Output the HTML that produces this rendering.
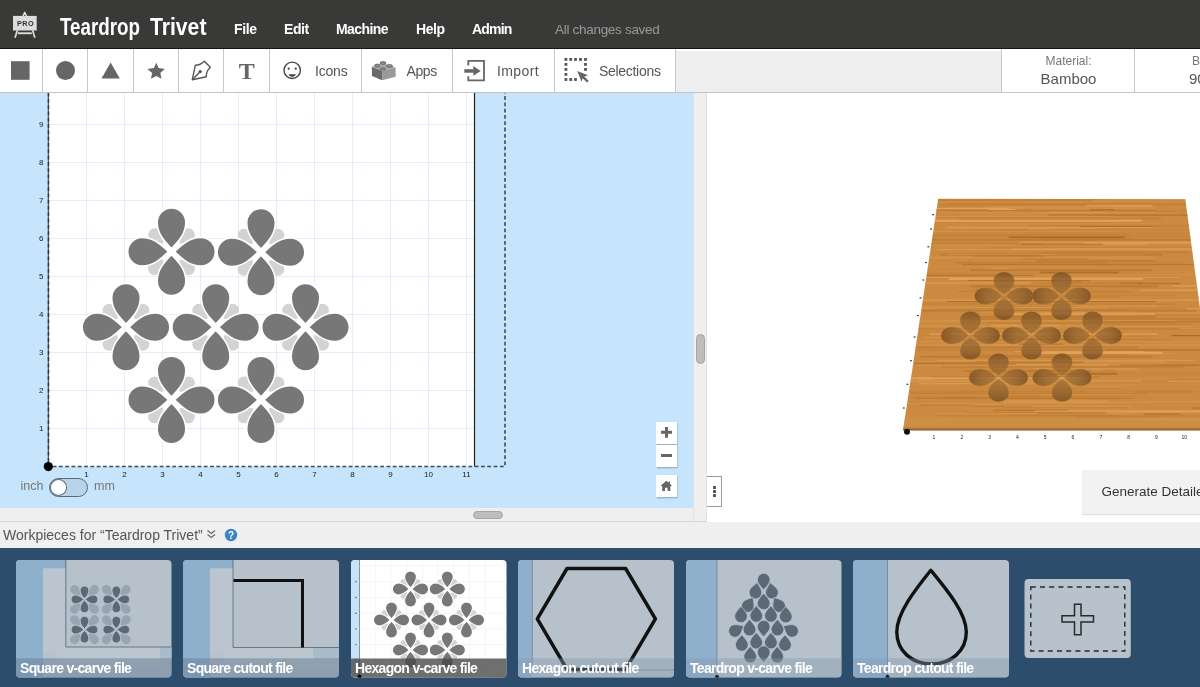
<!DOCTYPE html>
<html><head><meta charset="utf-8">
<style>
*{margin:0;padding:0;box-sizing:border-box}
html,body{width:1200px;height:687px;overflow:hidden;background:#fff;font-family:"Liberation Sans",sans-serif}
.a{position:absolute}
#hdr,#tb,#canvas,#right,#wpbar,#bottom{will-change:transform}
#hdr{left:0;top:0;width:1200px;height:49px;background:#393a38;border-bottom:1px solid #141414}
#tb{left:0;top:49px;width:1200px;height:44px;background:#eeeeee;border-bottom:1px solid #c4c4c4;box-shadow:inset 0 2px 0 #fff}
.ti{position:absolute;top:0;height:43px;background:#fff;border-right:1px solid #c8c8c8}
.tl{position:absolute;font-size:14px;color:#555;top:14px}
#canvas{left:0;top:93px;width:693px;height:415px;background:#c6e4fc;overflow:hidden}
#vscroll{left:693px;top:93px;width:14px;height:429px;background:#efefef;border-left:1px solid #e2e2e2;border-right:1px solid #e2e2e2}
#hscroll{left:0;top:508px;width:693px;height:13px;background:#efefef}
#right{left:707px;top:93px;width:493px;height:429px;background:#fff}
#wpbar{left:0;top:522px;width:1200px;height:26px;background:#efefef}
#bottom{left:0;top:548px;width:1200px;height:139px;background:#2c4d6c}
.hm{position:absolute;top:21px;color:#fff;font-weight:bold;font-size:14px;letter-spacing:-0.4px}
.zb{width:21.5px;height:22px;background:#fff;box-shadow:0.5px 1px 1.5px rgba(0,0,0,0.35)}
.cl{position:absolute;top:112px;font-size:14px;font-weight:bold;color:#fff;white-space:nowrap;letter-spacing:-0.7px}
</style></head><body>
<div id="hdr" class="a">
  <svg class="a" style="left:0;top:0" width="48" height="48" viewBox="0 0 48 48">
    <path d="M23 16 L24.75 12.4 L26.5 16" fill="none" stroke="#ddd" stroke-width="1.5" stroke-linejoin="round"/>
    <rect x="13" y="15.9" width="23.7" height="14.6" fill="#dcdcdc"/>
    <path d="M17.4 30.3 L15 37.8 M32.6 30.3 L34.8 37.8" stroke="#dcdcdc" stroke-width="1.7"/>
    <rect x="17.8" y="32.3" width="14" height="1.9" fill="#dcdcdc"/>
    <text x="25.6" y="25.9" text-anchor="middle" font-family="Liberation Sans" font-weight="bold" font-size="7.3" fill="#333" letter-spacing="0.5">PRO</text>
  </svg>
  <div class="a" style="left:59.5px;top:13.5px;font-size:23.5px;font-weight:bold;color:#fff;white-space:nowrap;transform-origin:0 0;transform:scaleX(0.80)">Teardrop</div><div class="a" style="left:150px;top:13.5px;font-size:23.5px;font-weight:bold;color:#fff;white-space:nowrap;transform-origin:0 0;transform:scaleX(0.90)">Trivet</div>
  <div class="hm" style="left:234px">File</div>
  <div class="hm" style="left:284px">Edit</div>
  <div class="hm" style="left:336px;letter-spacing:-0.6px">Machine</div>
  <div class="hm" style="left:416px">Help</div>
  <div class="hm" style="left:472px;letter-spacing:-0.8px">Admin</div>
  <div class="a" style="left:555px;top:22px;font-size:13.5px;color:#999;letter-spacing:-0.3px;white-space:nowrap">All changes saved</div>
</div>
<div id="tb" class="a">
  <div class="ti" style="left:0;width:43px"></div>
  <div class="ti" style="left:43px;width:45px"></div>
  <div class="ti" style="left:88px;width:46px"></div>
  <div class="ti" style="left:134px;width:45px"></div>
  <div class="ti" style="left:179px;width:45px"></div>
  <div class="ti" style="left:224px;width:46px"></div>
  <div class="ti" style="left:270px;width:92px"><span class="tl" style="left:45px;letter-spacing:-0.2px">Icons</span></div>
  <div class="ti" style="left:362px;width:91px"><span class="tl" style="left:44.5px;letter-spacing:-0.4px">Apps</span></div>
  <div class="ti" style="left:453px;width:102px"><span class="tl" style="left:44px;letter-spacing:0.4px">Import</span></div>
  <div class="ti" style="left:555px;width:121px"><span class="tl" style="left:44px;letter-spacing:-0.3px">Selections</span></div>
  <div class="ti" style="left:1001px;width:134px;border-left:1px solid #c8c8c8">
    <div class="a" style="left:0;width:133px;top:5px;text-align:center;font-size:12px;color:#777">Material:</div>
    <div class="a" style="left:0;width:133px;top:21px;text-align:center;font-size:15px;color:#555">Bamboo</div>
  </div>
  <div class="ti" style="left:1135px;width:65px;border-right:none">
    <div class="a" style="left:57px;top:5px;font-size:12px;color:#777">B</div>
    <div class="a" style="left:54px;top:21px;font-size:15px;color:#555">90</div>
  </div>
  <svg class="a" style="left:0;top:0" width="700" height="44" viewBox="0 49 700 44">
    <rect x="11" y="61.2" width="18.6" height="18.6" fill="#666"/>
    <circle cx="65.5" cy="70.5" r="9.5" fill="#666"/>
    <polygon points="110.6,62.6 101.5,78.6 119.8,78.6" fill="#666"/>
    <polygon points="156.3,62.7 158.6,67.9 164.8,68.9 160.3,73.1 161.6,78.8 156.3,75.9 150.9,78.8 152.2,73.1 147.4,68.9 153.9,67.9" fill="#666"/>
    <g fill="none" stroke="#555" stroke-width="1.4" stroke-linejoin="round">
      <path d="M192.3 79.7 L195.3 65.3 Q200 65.5 204.3 61.3 L210.3 67.3 Q206 71.5 206.3 76.7 Z"/>
      <path d="M192.6 79.4 L199.3 72.4"/>
    </g>
    <circle cx="200.2" cy="71.6" r="1.7" fill="#555"/>
    <text x="246.7" y="79" text-anchor="middle" font-family="Liberation Serif" font-weight="bold" font-size="24" fill="#666">T</text>
    <circle cx="292.2" cy="70.3" r="8.2" fill="none" stroke="#444" stroke-width="1.4"/>
    <circle cx="288.7" cy="68.7" r="1.1" fill="#444"/>
    <circle cx="295.7" cy="68.7" r="1.1" fill="#444"/>
    <path d="M288.5 74.2 L296 74.2 Q295 77 292.2 77 Q289.5 77 288.5 74.2 Z" fill="#444"/>
    <polygon points="371.8,66.8 382,70.7 382.2,80.3 372,76" fill="#6a6a6a"/>
    <polygon points="382,70.7 395.6,67.2 395.6,76.8 382.2,80.3" fill="#9a9a9a"/>
    <polygon points="371.8,66.8 383.3,63.3 395.6,67.2 382,70.7" fill="#a8a8a8"/>
    <g fill="#8a8a8a" stroke="#666" stroke-width="0.8">
      <ellipse cx="377.5" cy="65.6" rx="3" ry="1.5"/>
      <ellipse cx="389.5" cy="66" rx="3" ry="1.5"/>
      <rect x="380" y="63" width="6" height="4.5" fill="#aaa" stroke="none"/>
      <ellipse cx="383" cy="63" rx="3" ry="1.4"/>
      <rect x="380" y="66" width="6" height="3" fill="#aaa" stroke="none"/>
      <ellipse cx="383" cy="69" rx="3" ry="1.2"/>
    </g>
    <path d="M468.3 65.5 V60.9 H484 V80.3 H468.3 V76.2" fill="none" stroke="#666" stroke-width="1.8"/>
    <rect x="464.3" y="69.2" width="9.5" height="3.5" fill="#666"/>
    <polygon points="473.3,65.9 480.7,70.9 473.3,75.7" fill="#666"/>
    <g fill="#555">
      <rect x="564.5" y="58" width="2.8" height="2.8"/><rect x="569.3" y="58" width="2.8" height="2.8"/><rect x="574.1" y="58" width="2.8" height="2.8"/><rect x="579.1" y="58" width="2.8" height="2.8"/><rect x="584.1" y="58" width="2.8" height="2.8"/>
      <rect x="564.5" y="63" width="2.8" height="2.8"/><rect x="584.1" y="63" width="2.8" height="2.8"/>
      <rect x="564.5" y="68" width="2.8" height="2.8"/><rect x="584.1" y="68" width="2.8" height="2.8"/>
      <rect x="564.5" y="73" width="2.8" height="2.8"/>
      <rect x="564.5" y="78.1" width="2.8" height="2.8"/><rect x="569.3" y="78.1" width="2.8" height="2.8"/><rect x="574.1" y="78.1" width="2.8" height="2.8"/>
    </g>
    <path d="M577.2 70.9 L588.1 75.3 L584.3 76.6 L588.8 81 L587 82.6 L582.6 78.2 L581.6 81.8 Z" fill="#666"/>
  </svg>
</div>
<div id="canvas" class="a"><svg class="a" style="left:0;top:0" width="693" height="415" viewBox="0 93 693 415">
<defs><path id="bp" d="M0 -3 C6 -9.5 14.3 -17 14.3 -29.5 A14.3 14.3 0 0 0 -14.3 -29.5 C-14.3 -17 -6 -9.5 0 -3 Z"/>
<path id="sp" d="M0 -11.5 C2.8 -14.5 6.6 -17.5 6.6 -23.8 A6.6 6.6 0 0 0 -6.6 -23.8 C-6.6 -17.5 -2.8 -14.5 0 -11.5 Z"/>
<g id="fl"><g fill="#d3d3d3"><use href="#sp" transform="rotate(45)"/><use href="#sp" transform="rotate(135)"/><use href="#sp" transform="rotate(225)"/><use href="#sp" transform="rotate(315)"/></g>
<g fill="#777" stroke="#fff" stroke-width="1.6"><use href="#bp"/><use href="#bp" transform="rotate(90)"/><use href="#bp" transform="rotate(180)"/><use href="#bp" transform="rotate(270)"/></g></g></defs>
<rect x="48.5" y="80" width="426" height="386.5" fill="#fff"/>
<path d="M86.5 80V466.5 M124.5 80V466.5 M162.5 80V466.5 M200.5 80V466.5 M238.5 80V466.5 M276.5 80V466.5 M314.5 80V466.5 M352.5 80V466.5 M390.5 80V466.5 M428.5 80V466.5 M466.5 80V466.5 M48.5 428.5H474.5 M48.5 390.5H474.5 M48.5 352.5H474.5 M48.5 314.5H474.5 M48.5 276.5H474.5 M48.5 238.5H474.5 M48.5 200.5H474.5 M48.5 162.5H474.5 M48.5 124.5H474.5 M48.5 86.5H474.5" stroke="#e4edf9" stroke-width="1" fill="none"/>
<path d="M474.5 80V466.5" stroke="#222" stroke-width="1.2"/>
<path d="M48.5 80V466.5H505V80" fill="none" stroke="#3f4b57" stroke-width="1.6" stroke-dasharray="3.8 2.5"/>
<path d="M48.3 80V466.5" stroke="#333" stroke-width="1"/>
<use href="#fl" x="171.5" y="251.7"/>
<use href="#fl" x="261" y="252.2"/>
<use href="#fl" x="126" y="327.2"/>
<use href="#fl" x="215.7" y="327.2"/>
<use href="#fl" x="305.5" y="327.2"/>
<use href="#fl" x="171.5" y="399.9"/>
<use href="#fl" x="261" y="399.9"/>
<circle cx="48.3" cy="466.6" r="4.6" fill="#000"/>
<g font-family="Liberation Sans" font-size="8" fill="#1a1a1a">
<text x="43.5" y="431.2" text-anchor="end">1</text>
<text x="43.5" y="393.2" text-anchor="end">2</text>
<text x="43.5" y="355.2" text-anchor="end">3</text>
<text x="43.5" y="317.2" text-anchor="end">4</text>
<text x="43.5" y="279.2" text-anchor="end">5</text>
<text x="43.5" y="241.2" text-anchor="end">6</text>
<text x="43.5" y="203.2" text-anchor="end">7</text>
<text x="43.5" y="165.2" text-anchor="end">8</text>
<text x="43.5" y="127.2" text-anchor="end">9</text>
<text x="86.5" y="477.2" text-anchor="middle">1</text>
<text x="124.5" y="477.2" text-anchor="middle">2</text>
<text x="162.5" y="477.2" text-anchor="middle">3</text>
<text x="200.5" y="477.2" text-anchor="middle">4</text>
<text x="238.5" y="477.2" text-anchor="middle">5</text>
<text x="276.5" y="477.2" text-anchor="middle">6</text>
<text x="314.5" y="477.2" text-anchor="middle">7</text>
<text x="352.5" y="477.2" text-anchor="middle">8</text>
<text x="390.5" y="477.2" text-anchor="middle">9</text>
<text x="428.5" y="477.2" text-anchor="middle">10</text>
<text x="466.5" y="477.2" text-anchor="middle">11</text>
</g>
</svg>
<div class="a" style="left:20.5px;top:385.5px;font-size:12.5px;color:#777">inch</div>
<div class="a" style="left:94px;top:385.5px;font-size:12.5px;color:#777">mm</div>
<div class="a" style="left:48.5px;top:384.5px;width:39.5px;height:19px;border-radius:10px;background:#b8d3ea;border:1.2px solid #5a6a78"></div>
<div class="a" style="left:49.5px;top:385.5px;width:17.5px;height:17px;border-radius:50%;background:#fff;border:1px solid #5a6a78"></div>
<div class="a zb" style="left:655.5px;top:328.5px"></div><div class="a zb" style="left:655.5px;top:352px"></div><div class="a zb" style="left:655.5px;top:381.5px"></div>
<svg class="a" style="left:650px;top:320px" width="40" height="90" viewBox="650 413 40 90"><path d="M661 432.3H672M666.5 427V437.7" stroke="#666" stroke-width="3"/><path d="M661 455.5H672" stroke="#666" stroke-width="3"/><path d="M666.3 480.8L660.4 486H662.2V491H665V487.8H667.6V491H670.4V486H672.3L670 484V481.5H668.6V482.8Z" fill="#666"/></svg></div>
<div id="vscroll" class="a"><div class="a" style="left:2px;top:241px;width:8.5px;height:30px;border-radius:4.5px;background:#bdbdbd;border:1px solid #a5a5a5"></div></div>
<div id="hscroll" class="a"><div class="a" style="left:473px;top:3px;width:29.5px;height:8px;border-radius:4px;background:#bdbdbd;border:1px solid #a5a5a5"></div></div>
<div id="right" class="a"><svg class="a" style="left:0;top:0" width="493" height="429" viewBox="707 93 493 429">
<defs><clipPath id="bc"><polygon points="938.2,198.8 1185.3,199.2 1216.5,430.5 903,430.5"/></clipPath>
<linearGradient id="pg" x1="0" y1="0" x2="0" y2="1"><stop offset="0" stop-color="#7a4f22" stop-opacity="0.85"/><stop offset="0.5" stop-color="#8e602e" stop-opacity="0.72"/><stop offset="1" stop-color="#9c6a34" stop-opacity="0.7"/></linearGradient>
<path id="bp3" d="M0 -3 C7 -9 16 -15 16 -29 A16 16 0 0 0 -16 -29 C-16 -15 -7 -9 0 -3 Z"/>
</defs>
<g clip-path="url(#bc)">
<rect x="900" y="198" width="320" height="232" fill="#cb8a40"/>
<rect x="888.2" y="199.0" width="315.0" height="0.9" fill="#c48038" opacity="0.50"/>
<rect x="916.5" y="199.8" width="176.4" height="1.4" fill="#be7a32" opacity="0.75"/>
<rect x="890.0" y="201.1" width="274.8" height="0.7" fill="#d89a50" opacity="0.58"/>
<rect x="947.4" y="203.4" width="279.0" height="1.8" fill="#be7a32" opacity="0.59"/>
<rect x="904.5" y="204.1" width="193.1" height="2.2" fill="#c48038" opacity="0.44"/>
<rect x="977.1" y="205.3" width="131.1" height="2.2" fill="#c48038" opacity="0.35"/>
<rect x="985.2" y="206.0" width="169.2" height="1.8" fill="#d89a50" opacity="0.58"/>
<rect x="1037.0" y="207.6" width="97.3" height="2.2" fill="#d4924a" opacity="0.53"/>
<rect x="931.0" y="208.6" width="223.2" height="0.7" fill="#e0a55c" opacity="0.34"/>
<rect x="892.4" y="209.9" width="264.3" height="1.1" fill="#b06e28" opacity="0.60"/>
<rect x="951.7" y="210.8" width="272.6" height="0.9" fill="#c48038" opacity="0.77"/>
<rect x="939.5" y="211.5" width="215.0" height="1.4" fill="#d4924a" opacity="0.47"/>
<rect x="960.6" y="213.5" width="219.0" height="0.5" fill="#d89a50" opacity="0.77"/>
<rect x="1048.8" y="214.2" width="154.5" height="1.8" fill="#b06e28" opacity="0.62"/>
<rect x="958.5" y="215.4" width="146.7" height="1.1" fill="#d4924a" opacity="0.31"/>
<rect x="902.0" y="216.2" width="215.2" height="0.5" fill="#e0a55c" opacity="0.68"/>
<rect x="956.4" y="217.5" width="206.1" height="2.2" fill="#b87630" opacity="0.34"/>
<rect x="927.3" y="219.7" width="215.0" height="2.2" fill="#e6ad64" opacity="0.73"/>
<rect x="910.0" y="220.9" width="204.8" height="1.1" fill="#e0a55c" opacity="0.38"/>
<rect x="880.7" y="221.9" width="262.1" height="1.1" fill="#c48038" opacity="0.43"/>
<rect x="997.4" y="223.2" width="159.9" height="1.4" fill="#d4924a" opacity="0.78"/>
<rect x="1028.1" y="224.9" width="194.7" height="1.8" fill="#be7a32" opacity="0.53"/>
<rect x="947.0" y="226.7" width="205.2" height="1.4" fill="#e6ad64" opacity="0.50"/>
<rect x="954.9" y="228.0" width="141.6" height="0.7" fill="#d89a50" opacity="0.79"/>
<rect x="971.2" y="229.7" width="251.1" height="0.5" fill="#be7a32" opacity="0.58"/>
<rect x="905.3" y="231.4" width="212.6" height="0.5" fill="#e0a55c" opacity="0.61"/>
<rect x="1024.3" y="232.7" width="204.6" height="0.9" fill="#b87630" opacity="0.36"/>
<rect x="897.4" y="234.1" width="234.0" height="1.1" fill="#b06e28" opacity="0.34"/>
<rect x="914.9" y="235.2" width="307.9" height="2.2" fill="#c48038" opacity="0.56"/>
<rect x="1008.9" y="236.4" width="115.8" height="1.8" fill="#a5651f" opacity="0.76"/>
<rect x="1034.4" y="238.2" width="99.0" height="0.5" fill="#b06e28" opacity="0.56"/>
<rect x="917.9" y="239.2" width="283.8" height="1.4" fill="#a5651f" opacity="0.46"/>
<rect x="1019.1" y="241.6" width="171.9" height="2.2" fill="#e0a55c" opacity="0.70"/>
<rect x="884.9" y="242.6" width="199.3" height="1.4" fill="#b87630" opacity="0.48"/>
<rect x="1042.6" y="243.7" width="104.5" height="0.9" fill="#e0a55c" opacity="0.65"/>
<rect x="897.4" y="246.0" width="253.1" height="0.9" fill="#d4924a" opacity="0.34"/>
<rect x="991.0" y="247.2" width="208.9" height="1.1" fill="#be7a32" opacity="0.54"/>
<rect x="1013.0" y="247.9" width="179.5" height="1.8" fill="#d89a50" opacity="0.75"/>
<rect x="936.5" y="249.4" width="263.6" height="0.7" fill="#e6ad64" opacity="0.69"/>
<rect x="1041.0" y="251.7" width="147.8" height="1.1" fill="#b87630" opacity="0.50"/>
<rect x="1033.8" y="252.6" width="167.2" height="0.7" fill="#be7a32" opacity="0.38"/>
<rect x="939.6" y="253.5" width="222.7" height="2.2" fill="#b87630" opacity="0.63"/>
<rect x="1038.7" y="254.3" width="106.4" height="0.5" fill="#d89a50" opacity="0.56"/>
<rect x="916.2" y="256.5" width="239.0" height="2.2" fill="#e0a55c" opacity="0.31"/>
<rect x="1021.8" y="258.5" width="67.3" height="0.9" fill="#b06e28" opacity="0.57"/>
<rect x="1036.0" y="260.4" width="119.2" height="1.1" fill="#a5651f" opacity="0.51"/>
<rect x="954.8" y="262.0" width="152.6" height="1.4" fill="#a5651f" opacity="0.31"/>
<rect x="960.5" y="262.6" width="228.3" height="2.2" fill="#c48038" opacity="0.39"/>
<rect x="962.0" y="264.2" width="234.5" height="0.9" fill="#a5651f" opacity="0.57"/>
<rect x="887.2" y="266.4" width="207.5" height="0.5" fill="#e0a55c" opacity="0.40"/>
<rect x="984.1" y="267.8" width="171.7" height="0.5" fill="#d89a50" opacity="0.52"/>
<rect x="970.7" y="269.3" width="181.0" height="1.8" fill="#b06e28" opacity="0.53"/>
<rect x="1040.2" y="271.6" width="78.8" height="1.8" fill="#a5651f" opacity="0.74"/>
<rect x="900.7" y="273.2" width="245.6" height="0.7" fill="#b87630" opacity="0.37"/>
<rect x="993.8" y="273.9" width="203.8" height="0.7" fill="#e6ad64" opacity="0.34"/>
<rect x="1030.1" y="276.1" width="195.1" height="0.7" fill="#d4924a" opacity="0.37"/>
<rect x="907.7" y="277.1" width="272.5" height="0.5" fill="#e6ad64" opacity="0.74"/>
<rect x="948.6" y="278.1" width="194.5" height="1.8" fill="#e6ad64" opacity="0.80"/>
<rect x="974.2" y="279.4" width="171.9" height="0.5" fill="#d4924a" opacity="0.31"/>
<rect x="967.1" y="280.0" width="122.6" height="0.9" fill="#a5651f" opacity="0.61"/>
<rect x="897.8" y="282.4" width="222.0" height="2.2" fill="#e0a55c" opacity="0.79"/>
<rect x="902.0" y="283.1" width="241.3" height="2.2" fill="#c48038" opacity="0.44"/>
<rect x="971.2" y="285.3" width="186.0" height="2.2" fill="#b06e28" opacity="0.50"/>
<rect x="1015.9" y="286.8" width="91.6" height="0.9" fill="#d89a50" opacity="0.44"/>
<rect x="1016.3" y="289.0" width="76.3" height="0.9" fill="#be7a32" opacity="0.62"/>
<rect x="957.1" y="291.1" width="173.7" height="0.5" fill="#b06e28" opacity="0.73"/>
<rect x="1000.6" y="292.7" width="220.1" height="0.9" fill="#c48038" opacity="0.32"/>
<rect x="1038.5" y="295.1" width="135.8" height="0.9" fill="#be7a32" opacity="0.39"/>
<rect x="994.3" y="296.6" width="126.3" height="0.7" fill="#b06e28" opacity="0.52"/>
<rect x="1004.6" y="298.7" width="158.0" height="0.9" fill="#be7a32" opacity="0.31"/>
<rect x="898.1" y="299.6" width="304.8" height="1.1" fill="#e0a55c" opacity="0.77"/>
<rect x="946.8" y="301.0" width="209.2" height="1.1" fill="#a5651f" opacity="0.72"/>
<rect x="1029.9" y="302.8" width="159.4" height="0.7" fill="#d4924a" opacity="0.40"/>
<rect x="882.4" y="303.7" width="291.4" height="0.9" fill="#be7a32" opacity="0.72"/>
<rect x="993.1" y="305.9" width="144.0" height="1.1" fill="#c48038" opacity="0.33"/>
<rect x="887.7" y="307.4" width="220.1" height="0.9" fill="#e0a55c" opacity="0.65"/>
<rect x="935.9" y="308.5" width="291.8" height="0.5" fill="#b06e28" opacity="0.48"/>
<rect x="911.1" y="309.7" width="219.2" height="0.5" fill="#b06e28" opacity="0.41"/>
<rect x="922.2" y="310.4" width="274.2" height="0.9" fill="#a5651f" opacity="0.63"/>
<rect x="979.8" y="311.2" width="159.3" height="2.2" fill="#d89a50" opacity="0.37"/>
<rect x="1042.8" y="312.3" width="165.2" height="1.8" fill="#e0a55c" opacity="0.34"/>
<rect x="1002.5" y="313.2" width="151.6" height="1.8" fill="#e6ad64" opacity="0.68"/>
<rect x="1022.0" y="314.3" width="191.8" height="1.4" fill="#c48038" opacity="0.32"/>
<rect x="969.0" y="316.0" width="186.6" height="1.8" fill="#a5651f" opacity="0.37"/>
<rect x="979.3" y="318.1" width="234.6" height="2.2" fill="#be7a32" opacity="0.71"/>
<rect x="887.1" y="320.0" width="288.5" height="1.8" fill="#e0a55c" opacity="0.34"/>
<rect x="986.7" y="322.3" width="187.2" height="1.1" fill="#b87630" opacity="0.58"/>
<rect x="1015.6" y="324.1" width="176.6" height="1.1" fill="#b06e28" opacity="0.30"/>
<rect x="891.2" y="325.6" width="299.3" height="1.4" fill="#d89a50" opacity="0.63"/>
<rect x="1008.6" y="326.7" width="106.0" height="0.5" fill="#b06e28" opacity="0.42"/>
<rect x="893.0" y="328.4" width="323.5" height="1.1" fill="#b87630" opacity="0.72"/>
<rect x="905.1" y="329.6" width="213.0" height="0.5" fill="#e0a55c" opacity="0.34"/>
<rect x="890.3" y="331.5" width="230.0" height="0.9" fill="#c48038" opacity="0.31"/>
<rect x="929.4" y="333.3" width="228.0" height="1.8" fill="#e0a55c" opacity="0.64"/>
<rect x="973.3" y="334.7" width="153.4" height="1.1" fill="#d89a50" opacity="0.80"/>
<rect x="893.0" y="335.5" width="263.0" height="1.1" fill="#be7a32" opacity="0.44"/>
<rect x="1040.7" y="337.9" width="70.9" height="0.9" fill="#e6ad64" opacity="0.40"/>
<rect x="941.1" y="339.5" width="229.4" height="0.7" fill="#a5651f" opacity="0.43"/>
<rect x="919.3" y="341.3" width="295.3" height="0.9" fill="#d89a50" opacity="0.65"/>
<rect x="963.6" y="342.8" width="184.0" height="0.5" fill="#c48038" opacity="0.30"/>
<rect x="933.7" y="343.9" width="272.3" height="0.7" fill="#e6ad64" opacity="0.47"/>
<rect x="900.4" y="344.5" width="318.6" height="2.2" fill="#d4924a" opacity="0.72"/>
<rect x="891.0" y="346.4" width="247.5" height="1.8" fill="#b06e28" opacity="0.43"/>
<rect x="1008.5" y="348.5" width="199.7" height="0.5" fill="#d4924a" opacity="0.76"/>
<rect x="905.3" y="349.7" width="320.3" height="0.5" fill="#b06e28" opacity="0.62"/>
<rect x="1013.5" y="351.0" width="130.7" height="0.9" fill="#e0a55c" opacity="0.69"/>
<rect x="1039.9" y="351.7" width="122.5" height="2.2" fill="#e6ad64" opacity="0.76"/>
<rect x="1008.0" y="353.6" width="168.7" height="0.5" fill="#e6ad64" opacity="0.53"/>
<rect x="960.3" y="354.7" width="171.3" height="0.5" fill="#a5651f" opacity="0.36"/>
<rect x="920.6" y="355.8" width="231.9" height="1.8" fill="#b06e28" opacity="0.50"/>
<rect x="892.8" y="357.6" width="262.3" height="0.5" fill="#c48038" opacity="0.62"/>
<rect x="936.6" y="359.7" width="257.3" height="1.4" fill="#e0a55c" opacity="0.53"/>
<rect x="909.7" y="361.1" width="253.7" height="1.4" fill="#e0a55c" opacity="0.42"/>
<rect x="914.4" y="362.2" width="168.6" height="0.9" fill="#b06e28" opacity="0.70"/>
<rect x="915.7" y="364.4" width="204.8" height="1.1" fill="#e6ad64" opacity="0.67"/>
<rect x="941.2" y="366.4" width="241.8" height="1.1" fill="#b06e28" opacity="0.59"/>
<rect x="1032.5" y="367.9" width="105.2" height="2.2" fill="#e0a55c" opacity="0.35"/>
<rect x="1028.4" y="369.7" width="54.9" height="1.1" fill="#b06e28" opacity="0.72"/>
<rect x="963.3" y="370.3" width="127.7" height="1.8" fill="#b87630" opacity="0.78"/>
<rect x="1045.3" y="372.6" width="72.0" height="2.2" fill="#a5651f" opacity="0.73"/>
<rect x="996.0" y="373.4" width="225.3" height="0.7" fill="#c48038" opacity="0.56"/>
<rect x="1012.1" y="375.3" width="68.1" height="1.8" fill="#b87630" opacity="0.34"/>
<rect x="931.6" y="376.1" width="167.6" height="1.4" fill="#be7a32" opacity="0.62"/>
<rect x="899.1" y="377.2" width="191.5" height="1.8" fill="#e6ad64" opacity="0.65"/>
<rect x="918.0" y="378.7" width="252.2" height="1.4" fill="#e0a55c" opacity="0.49"/>
<rect x="933.8" y="379.4" width="272.1" height="0.9" fill="#b87630" opacity="0.44"/>
<rect x="885.0" y="380.4" width="256.8" height="1.4" fill="#e0a55c" opacity="0.57"/>
<rect x="1030.4" y="382.2" width="146.7" height="0.5" fill="#be7a32" opacity="0.40"/>
<rect x="918.6" y="382.9" width="166.6" height="0.7" fill="#e6ad64" opacity="0.76"/>
<rect x="913.7" y="384.1" width="285.9" height="1.1" fill="#d4924a" opacity="0.64"/>
<rect x="1044.9" y="386.0" width="81.9" height="1.4" fill="#d89a50" opacity="0.40"/>
<rect x="1009.3" y="388.1" width="115.0" height="0.7" fill="#b87630" opacity="0.41"/>
<rect x="962.5" y="390.4" width="254.1" height="1.1" fill="#c48038" opacity="0.75"/>
<rect x="889.2" y="391.1" width="194.3" height="1.4" fill="#c48038" opacity="0.76"/>
<rect x="911.3" y="392.8" width="236.1" height="1.1" fill="#be7a32" opacity="0.65"/>
<rect x="1038.4" y="394.7" width="91.0" height="0.9" fill="#d89a50" opacity="0.80"/>
<rect x="993.0" y="395.6" width="143.8" height="1.4" fill="#b87630" opacity="0.32"/>
<rect x="880.5" y="396.9" width="241.5" height="0.9" fill="#b87630" opacity="0.38"/>
<rect x="915.3" y="398.1" width="218.2" height="0.5" fill="#a5651f" opacity="0.78"/>
<rect x="999.9" y="400.2" width="109.5" height="2.2" fill="#e6ad64" opacity="0.34"/>
<rect x="1005.3" y="401.8" width="145.8" height="1.1" fill="#e0a55c" opacity="0.46"/>
<rect x="885.9" y="403.5" width="203.5" height="0.7" fill="#e6ad64" opacity="0.32"/>
<rect x="1032.8" y="405.8" width="98.1" height="0.9" fill="#e0a55c" opacity="0.67"/>
<rect x="1001.8" y="406.9" width="125.6" height="1.4" fill="#be7a32" opacity="0.43"/>
<rect x="919.8" y="408.0" width="231.5" height="0.5" fill="#d89a50" opacity="0.31"/>
<rect x="1035.3" y="410.3" width="166.9" height="2.2" fill="#e6ad64" opacity="0.69"/>
<rect x="1038.3" y="411.1" width="87.2" height="1.1" fill="#c48038" opacity="0.30"/>
<rect x="934.3" y="413.0" width="200.0" height="0.7" fill="#e0a55c" opacity="0.46"/>
<rect x="1008.0" y="415.0" width="109.1" height="0.5" fill="#a5651f" opacity="0.40"/>
<rect x="935.4" y="415.7" width="291.7" height="0.5" fill="#b87630" opacity="0.58"/>
<rect x="915.4" y="417.9" width="227.7" height="0.5" fill="#b06e28" opacity="0.61"/>
<rect x="950.9" y="420.3" width="222.2" height="1.1" fill="#c48038" opacity="0.42"/>
<rect x="1154.1" y="364.6" width="84.8" height="0.9" fill="#a8661f" opacity="0.42"/>
<rect x="1011.9" y="324.7" width="92.5" height="0.9" fill="#e8b06a" opacity="0.40"/>
<rect x="946.0" y="254.0" width="107.8" height="0.9" fill="#e8b06a" opacity="0.33"/>
<rect x="973.8" y="255.4" width="70.3" height="1.2" fill="#a8661f" opacity="0.49"/>
<rect x="901.3" y="208.1" width="107.7" height="0.9" fill="#e8b06a" opacity="0.67"/>
<rect x="988.1" y="208.9" width="27.5" height="1.2" fill="#e8b06a" opacity="0.69"/>
<rect x="1179.1" y="328.3" width="54.1" height="0.9" fill="#e8b06a" opacity="0.54"/>
<rect x="1099.4" y="370.5" width="15.7" height="0.6" fill="#9a5a1a" opacity="0.31"/>
<rect x="913.2" y="274.8" width="120.0" height="1.2" fill="#a8661f" opacity="0.59"/>
<rect x="1144.4" y="401.1" width="101.0" height="1.2" fill="#dca058" opacity="0.45"/>
<rect x="923.4" y="336.6" width="18.3" height="1.2" fill="#dca058" opacity="0.49"/>
<rect x="1138.8" y="289.8" width="84.7" height="1.2" fill="#e8b06a" opacity="0.51"/>
<rect x="1019.3" y="343.7" width="43.5" height="1.2" fill="#9a5a1a" opacity="0.42"/>
<rect x="993.7" y="409.7" width="74.5" height="0.9" fill="#9a5a1a" opacity="0.47"/>
<rect x="1199.0" y="390.1" width="53.2" height="0.9" fill="#e8b06a" opacity="0.59"/>
<rect x="901.8" y="244.8" width="109.7" height="0.6" fill="#dca058" opacity="0.63"/>
<rect x="1164.9" y="289.4" width="63.4" height="0.6" fill="#e8b06a" opacity="0.31"/>
<rect x="1092.2" y="321.3" width="110.5" height="1.2" fill="#a8661f" opacity="0.55"/>
<rect x="1051.3" y="281.6" width="30.3" height="0.6" fill="#9a5a1a" opacity="0.51"/>
<rect x="932.6" y="403.6" width="66.5" height="0.9" fill="#e8b06a" opacity="0.35"/>
<rect x="1192.7" y="407.5" width="65.7" height="1.2" fill="#a8661f" opacity="0.67"/>
<rect x="1171.3" y="285.3" width="80.1" height="1.2" fill="#e8b06a" opacity="0.61"/>
<rect x="1021.3" y="248.9" width="103.9" height="0.6" fill="#dca058" opacity="0.53"/>
<rect x="1181.6" y="209.2" width="31.4" height="0.6" fill="#9a5a1a" opacity="0.36"/>
<rect x="1144.7" y="413.6" width="35.2" height="1.2" fill="#a8661f" opacity="0.64"/>
<rect x="1079.9" y="225.9" width="72.8" height="1.2" fill="#9a5a1a" opacity="0.47"/>
<rect x="1027.7" y="328.2" width="84.2" height="1.2" fill="#dca058" opacity="0.48"/>
<rect x="1085.7" y="205.1" width="66.4" height="0.9" fill="#e8b06a" opacity="0.61"/>
<rect x="1037.5" y="371.6" width="33.9" height="0.9" fill="#dca058" opacity="0.34"/>
<rect x="1029.2" y="228.3" width="24.6" height="1.2" fill="#dca058" opacity="0.50"/>
<rect x="1090.9" y="209.0" width="23.6" height="1.2" fill="#9a5a1a" opacity="0.50"/>
<rect x="1051.2" y="211.9" width="54.7" height="0.6" fill="#e8b06a" opacity="0.64"/>
<rect x="1119.6" y="419.1" width="100.6" height="0.6" fill="#e8b06a" opacity="0.69"/>
<rect x="1187.0" y="308.2" width="111.2" height="1.2" fill="#e8b06a" opacity="0.62"/>
<rect x="919.7" y="404.7" width="51.8" height="0.6" fill="#9a5a1a" opacity="0.43"/>
<rect x="1171.5" y="335.0" width="62.9" height="1.2" fill="#9a5a1a" opacity="0.69"/>
<rect x="1077.6" y="305.6" width="79.7" height="0.9" fill="#e8b06a" opacity="0.45"/>
<rect x="1021.0" y="243.8" width="81.8" height="1.2" fill="#9a5a1a" opacity="0.43"/>
<rect x="1137.6" y="282.9" width="42.8" height="1.2" fill="#a8661f" opacity="0.64"/>
<rect x="1035.9" y="412.6" width="69.8" height="0.9" fill="#a8661f" opacity="0.70"/>
<rect x="1018.3" y="338.6" width="98.8" height="0.9" fill="#9a5a1a" opacity="0.70"/>
<rect x="1008.1" y="327.0" width="95.3" height="0.6" fill="#dca058" opacity="0.37"/>
<rect x="914.5" y="363.6" width="101.1" height="0.9" fill="#9a5a1a" opacity="0.56"/>
<rect x="1075.8" y="416.5" width="84.7" height="1.2" fill="#9a5a1a" opacity="0.30"/>
<rect x="944.8" y="207.4" width="79.7" height="0.9" fill="#dca058" opacity="0.51"/>
<rect x="939.6" y="397.0" width="38.9" height="0.6" fill="#a8661f" opacity="0.32"/>
<rect x="991.1" y="324.8" width="69.9" height="0.9" fill="#e8b06a" opacity="0.53"/>
<rect x="961.3" y="329.6" width="80.5" height="0.6" fill="#dca058" opacity="0.35"/>
<rect x="973.1" y="406.1" width="30.7" height="0.6" fill="#a8661f" opacity="0.56"/>
<rect x="1134.6" y="391.7" width="57.2" height="0.6" fill="#9a5a1a" opacity="0.32"/>
<rect x="1167.8" y="380.6" width="77.4" height="1.2" fill="#dca058" opacity="0.67"/>
<rect x="974.5" y="361.4" width="109.9" height="0.6" fill="#a8661f" opacity="0.51"/>
<rect x="971.3" y="289.3" width="21.1" height="0.6" fill="#a8661f" opacity="0.55"/>
<rect x="959.2" y="344.5" width="58.4" height="1.2" fill="#dca058" opacity="0.37"/>
<rect x="990.1" y="268.1" width="20.1" height="1.2" fill="#dca058" opacity="0.52"/>
<rect x="1031.0" y="282.5" width="110.8" height="1.2" fill="#a8661f" opacity="0.56"/>
<rect x="1199.0" y="238.6" width="42.4" height="0.6" fill="#a8661f" opacity="0.43"/>
<rect x="1108.5" y="364.9" width="103.8" height="0.9" fill="#a8661f" opacity="0.55"/>
<rect x="1105.7" y="349.4" width="111.3" height="0.9" fill="#9a5a1a" opacity="0.56"/>
<rect x="965.1" y="412.3" width="107.4" height="0.6" fill="#a8661f" opacity="0.40"/>
<rect x="900" y="417" width="320" height="14" fill="#d29448" opacity="0.55"/>
<rect x="900" y="427.5" width="320" height="3" fill="#a56a2a" opacity="0.55"/>
<rect x="900" y="429.6" width="320" height="1" fill="#5a3a18" opacity="0.8"/>
<g transform="translate(1004 296) scale(0.66 0.54)">
<use href="#bp3" transform="rotate(0)" fill="url(#pg)" stroke="#d19048" stroke-opacity="0.6" stroke-width="1.2"/>
<use href="#bp3" transform="rotate(90)" fill="url(#pg)" stroke="#d19048" stroke-opacity="0.6" stroke-width="1.2"/>
<use href="#bp3" transform="rotate(180)" fill="url(#pg)" stroke="#d19048" stroke-opacity="0.6" stroke-width="1.2"/>
<use href="#bp3" transform="rotate(270)" fill="url(#pg)" stroke="#d19048" stroke-opacity="0.6" stroke-width="1.2"/>
</g>
<g transform="translate(1061.5 296) scale(0.66 0.54)">
<use href="#bp3" transform="rotate(0)" fill="url(#pg)" stroke="#d19048" stroke-opacity="0.6" stroke-width="1.2"/>
<use href="#bp3" transform="rotate(90)" fill="url(#pg)" stroke="#d19048" stroke-opacity="0.6" stroke-width="1.2"/>
<use href="#bp3" transform="rotate(180)" fill="url(#pg)" stroke="#d19048" stroke-opacity="0.6" stroke-width="1.2"/>
<use href="#bp3" transform="rotate(270)" fill="url(#pg)" stroke="#d19048" stroke-opacity="0.6" stroke-width="1.2"/>
</g>
<g transform="translate(970.5 335.5) scale(0.66 0.54)">
<use href="#bp3" transform="rotate(0)" fill="url(#pg)" stroke="#d19048" stroke-opacity="0.6" stroke-width="1.2"/>
<use href="#bp3" transform="rotate(90)" fill="url(#pg)" stroke="#d19048" stroke-opacity="0.6" stroke-width="1.2"/>
<use href="#bp3" transform="rotate(180)" fill="url(#pg)" stroke="#d19048" stroke-opacity="0.6" stroke-width="1.2"/>
<use href="#bp3" transform="rotate(270)" fill="url(#pg)" stroke="#d19048" stroke-opacity="0.6" stroke-width="1.2"/>
</g>
<g transform="translate(1031.5 335.5) scale(0.66 0.54)">
<use href="#bp3" transform="rotate(0)" fill="url(#pg)" stroke="#d19048" stroke-opacity="0.6" stroke-width="1.2"/>
<use href="#bp3" transform="rotate(90)" fill="url(#pg)" stroke="#d19048" stroke-opacity="0.6" stroke-width="1.2"/>
<use href="#bp3" transform="rotate(180)" fill="url(#pg)" stroke="#d19048" stroke-opacity="0.6" stroke-width="1.2"/>
<use href="#bp3" transform="rotate(270)" fill="url(#pg)" stroke="#d19048" stroke-opacity="0.6" stroke-width="1.2"/>
</g>
<g transform="translate(1092.5 335.5) scale(0.66 0.54)">
<use href="#bp3" transform="rotate(0)" fill="url(#pg)" stroke="#d19048" stroke-opacity="0.6" stroke-width="1.2"/>
<use href="#bp3" transform="rotate(90)" fill="url(#pg)" stroke="#d19048" stroke-opacity="0.6" stroke-width="1.2"/>
<use href="#bp3" transform="rotate(180)" fill="url(#pg)" stroke="#d19048" stroke-opacity="0.6" stroke-width="1.2"/>
<use href="#bp3" transform="rotate(270)" fill="url(#pg)" stroke="#d19048" stroke-opacity="0.6" stroke-width="1.2"/>
</g>
<g transform="translate(998.5 377.5) scale(0.66 0.54)">
<use href="#bp3" transform="rotate(0)" fill="url(#pg)" stroke="#d19048" stroke-opacity="0.6" stroke-width="1.2"/>
<use href="#bp3" transform="rotate(90)" fill="url(#pg)" stroke="#d19048" stroke-opacity="0.6" stroke-width="1.2"/>
<use href="#bp3" transform="rotate(180)" fill="url(#pg)" stroke="#d19048" stroke-opacity="0.6" stroke-width="1.2"/>
<use href="#bp3" transform="rotate(270)" fill="url(#pg)" stroke="#d19048" stroke-opacity="0.6" stroke-width="1.2"/>
</g>
<g transform="translate(1062 377.5) scale(0.66 0.54)">
<use href="#bp3" transform="rotate(0)" fill="url(#pg)" stroke="#d19048" stroke-opacity="0.6" stroke-width="1.2"/>
<use href="#bp3" transform="rotate(90)" fill="url(#pg)" stroke="#d19048" stroke-opacity="0.6" stroke-width="1.2"/>
<use href="#bp3" transform="rotate(180)" fill="url(#pg)" stroke="#d19048" stroke-opacity="0.6" stroke-width="1.2"/>
<use href="#bp3" transform="rotate(270)" fill="url(#pg)" stroke="#d19048" stroke-opacity="0.6" stroke-width="1.2"/>
</g>
</g>
<circle cx="907" cy="431.8" r="3" fill="#111"/>
<g font-family="Liberation Sans" font-size="5" fill="#222">
<text x="934.0" y="439" text-anchor="middle">1</text>
<text x="961.8" y="439" text-anchor="middle">2</text>
<text x="989.6" y="439" text-anchor="middle">3</text>
<text x="1017.4" y="439" text-anchor="middle">4</text>
<text x="1045.2" y="439" text-anchor="middle">5</text>
<text x="1073.0" y="439" text-anchor="middle">6</text>
<text x="1100.8" y="439" text-anchor="middle">7</text>
<text x="1128.6" y="439" text-anchor="middle">8</text>
<text x="1156.4" y="439" text-anchor="middle">9</text>
<text x="1184.2" y="439" text-anchor="middle">10</text>
</g>
<rect x="932.3" y="214.0" width="1.8" height="1.2" fill="#333"/>
<rect x="930.1" y="228.4" width="1.8" height="1.2" fill="#333"/>
<rect x="927.4" y="246.2" width="1.8" height="1.2" fill="#333"/>
<rect x="925.0" y="261.9" width="1.8" height="1.2" fill="#333"/>
<rect x="922.4" y="279.4" width="1.8" height="1.2" fill="#333"/>
<rect x="919.6" y="297.3" width="1.8" height="1.2" fill="#333"/>
<rect x="916.9" y="315.0" width="1.8" height="1.2" fill="#333"/>
<rect x="913.7" y="336.4" width="1.8" height="1.2" fill="#333"/>
<rect x="910.1" y="360.1" width="1.8" height="1.2" fill="#333"/>
<rect x="906.5" y="383.7" width="1.8" height="1.2" fill="#333"/>
<rect x="902.9" y="407.4" width="1.8" height="1.2" fill="#333"/>
</svg>
<div class="a" style="left:375px;top:377px;width:130px;height:43.5px;background:#f2f2f2;box-shadow:0 1px 1px rgba(0,0,0,0.12)"></div>
<div class="a" style="left:394.5px;top:391px;font-size:13.5px;color:#333;white-space:nowrap">Generate Detailed</div>
<div class="a" style="left:0;top:383px;width:15px;height:31px;background:#fff;border:1px solid #999;border-left:none"></div>
<div class="a" style="left:5.8px;top:392.5px;width:3px;height:3px;background:#555;border-radius:0.6px"></div>
<div class="a" style="left:5.8px;top:396.5px;width:3px;height:3px;background:#555;border-radius:0.6px"></div>
<div class="a" style="left:5.8px;top:400.5px;width:3px;height:3px;background:#555;border-radius:0.6px"></div>
</div>
<div class="a" style="left:0;top:521px;width:707px;height:1px;background:#d8d8d8"></div>
<div id="wpbar" class="a">
<div class="a" style="left:3px;top:5px;font-size:14px;color:#555;white-space:nowrap">Workpieces for “Teardrop Trivet”</div>
<svg class="a" style="left:205px;top:6px" width="40" height="16" viewBox="205 527 40 16"><path d="M207.5 529.5L211.3 532.5L215 529.5M207.5 533.5L211.3 536.5L215 533.5" fill="none" stroke="#666" stroke-width="1.2"/><circle cx="231" cy="534" r="6.2" fill="#3a85c8"/><text x="231" y="538.2" text-anchor="middle" font-family="Liberation Sans" font-weight="bold" font-size="10" fill="#fff">?</text></svg>
</div>
<div id="bottom" class="a"><svg class="a" style="left:0;top:0" width="1200" height="139" viewBox="0 548 1200 139">
<defs>
<path id="bpc" d="M0 -3 C6 -9.5 14.3 -17 14.3 -29.5 A14.3 14.3 0 0 0 -14.3 -29.5 C-14.3 -17 -6 -9.5 0 -3 Z"/>
<path id="spc" d="M0 -12 C2.5 -15 6.5 -18 6.5 -24.5 A6.5 6.5 0 0 0 -6.5 -24.5 C-6.5 -18 -2.5 -15 0 -12 Z"/>
<clipPath id="c1"><rect x="16" y="560" width="155.5" height="117.5" rx="4"/></clipPath>
<clipPath id="c2"><rect x="183" y="560" width="156" height="117.5" rx="4"/></clipPath>
<clipPath id="c3"><rect x="351" y="560" width="155.5" height="117.5" rx="4"/></clipPath>
<clipPath id="c4"><rect x="518" y="560" width="156" height="117.5" rx="4"/></clipPath>
<clipPath id="c5"><rect x="686" y="560" width="155.5" height="117.5" rx="4"/></clipPath>
<clipPath id="c6"><rect x="853" y="560" width="156" height="117.5" rx="4"/></clipPath>
<path id="td" d="M0 -7.3 C2.2 -4.6 5.6 -1.6 5.6 1.6 A5.6 5.6 0 0 1 -5.6 1.6 C-5.6 -1.6 -2.2 -4.6 0 -7.3 Z"/>
</defs>
<g clip-path="url(#c1)">
<rect x="16" y="560" width="156" height="118" fill="#b6c1cb"/>
<rect x="16" y="560" width="27" height="118" fill="#8eb0cd"/>
<rect x="43" y="560" width="23" height="8.5" fill="#8eb0cd"/>
<rect x="43" y="568.5" width="23" height="84.5" fill="#bac5cf"/>
<rect x="57" y="646.5" width="103" height="23" fill="#bcc6cf"/>
<rect x="160" y="647" width="12" height="12" fill="#a9bccc"/>
<path d="M65.8 560V647H172" fill="none" stroke="#55626e" stroke-width="0.8"/>
<g transform="translate(84.5 599.4) scale(0.305)">
<g fill="#97a4b1"><use href="#bpc" transform="rotate(45) translate(0 -17)"/><use href="#bpc" transform="rotate(135) translate(0 -17)"/><use href="#bpc" transform="rotate(225) translate(0 -17)"/><use href="#bpc" transform="rotate(315) translate(0 -17)"/></g>
<g fill="#5b6977" stroke="#b6c1cb" stroke-width="3"><use href="#bpc" transform="rotate(0)"/><use href="#bpc" transform="rotate(90)"/><use href="#bpc" transform="rotate(180)"/><use href="#bpc" transform="rotate(270)"/></g></g>
<g transform="translate(116.3 599.4) scale(0.305)">
<g fill="#97a4b1"><use href="#bpc" transform="rotate(45) translate(0 -17)"/><use href="#bpc" transform="rotate(135) translate(0 -17)"/><use href="#bpc" transform="rotate(225) translate(0 -17)"/><use href="#bpc" transform="rotate(315) translate(0 -17)"/></g>
<g fill="#5b6977" stroke="#b6c1cb" stroke-width="3"><use href="#bpc" transform="rotate(0)"/><use href="#bpc" transform="rotate(90)"/><use href="#bpc" transform="rotate(180)"/><use href="#bpc" transform="rotate(270)"/></g></g>
<g transform="translate(84.5 629.6) scale(0.305)">
<g fill="#97a4b1"><use href="#bpc" transform="rotate(45) translate(0 -17)"/><use href="#bpc" transform="rotate(135) translate(0 -17)"/><use href="#bpc" transform="rotate(225) translate(0 -17)"/><use href="#bpc" transform="rotate(315) translate(0 -17)"/></g>
<g fill="#5b6977" stroke="#b6c1cb" stroke-width="3"><use href="#bpc" transform="rotate(0)"/><use href="#bpc" transform="rotate(90)"/><use href="#bpc" transform="rotate(180)"/><use href="#bpc" transform="rotate(270)"/></g></g>
<g transform="translate(116.3 629.6) scale(0.305)">
<g fill="#97a4b1"><use href="#bpc" transform="rotate(45) translate(0 -17)"/><use href="#bpc" transform="rotate(135) translate(0 -17)"/><use href="#bpc" transform="rotate(225) translate(0 -17)"/><use href="#bpc" transform="rotate(315) translate(0 -17)"/></g>
<g fill="#5b6977" stroke="#b6c1cb" stroke-width="3"><use href="#bpc" transform="rotate(0)"/><use href="#bpc" transform="rotate(90)"/><use href="#bpc" transform="rotate(180)"/><use href="#bpc" transform="rotate(270)"/></g></g>
<rect x="16" y="658.3" width="156" height="20" fill="#6a8299" opacity="0.55"/>
</g>
<g clip-path="url(#c2)">
<rect x="183" y="560" width="156" height="118" fill="#b6c1cb"/>
<rect x="183" y="560" width="27" height="118" fill="#8eb0cd"/>
<rect x="210" y="560" width="23" height="8.5" fill="#8eb0cd"/>
<rect x="210" y="568.5" width="23" height="84.5" fill="#bac5cf"/>
<rect x="224" y="647" width="127" height="23" fill="#bcc6cf"/>
<rect x="313" y="647" width="26" height="12" fill="#a9bccc"/>
<path d="M233 560V647.5H339" fill="none" stroke="#55626e" stroke-width="0.8"/>
<path d="M233.5 580.5H302.5V647.5" fill="none" stroke="#111" stroke-width="3"/>
<rect x="183" y="658.3" width="156" height="20" fill="#6a8299" opacity="0.55"/>
</g>
<g clip-path="url(#c3)">
<rect x="351" y="560" width="156" height="118" fill="#fff"/>
<rect x="351" y="560" width="8.5" height="118" fill="#c6e3f9"/>
<path d="M359.5 560V678" stroke="#777" stroke-width="0.8"/>
<path d="M375.2 560V678 M390.9 560V678 M406.6 560V678 M422.3 560V678 M438.0 560V678 M453.7 560V678 M469.4 560V678 M485.1 560V678 M359.5 660.3H507 M359.5 644.6H507 M359.5 628.9H507 M359.5 613.2H507 M359.5 597.5H507 M359.5 581.8H507 M359.5 566.1H507" stroke="#eef2f8" stroke-width="0.7"/>
<circle cx="356" cy="660.3" r="0.7" fill="#445"/>
<circle cx="356" cy="644.6" r="0.7" fill="#445"/>
<circle cx="356" cy="628.9" r="0.7" fill="#445"/>
<circle cx="356" cy="613.2" r="0.7" fill="#445"/>
<circle cx="356" cy="597.5" r="0.7" fill="#445"/>
<circle cx="356" cy="581.8" r="0.7" fill="#445"/>
<g transform="translate(410.5 589) scale(0.413)">
<g fill="#d3d3d3"><use href="#spc" transform="rotate(45)"/><use href="#spc" transform="rotate(135)"/><use href="#spc" transform="rotate(225)"/><use href="#spc" transform="rotate(315)"/></g>
<g fill="#777" stroke="#fff" stroke-width="2.5"><use href="#bpc" transform="rotate(0)"/><use href="#bpc" transform="rotate(90)"/><use href="#bpc" transform="rotate(180)"/><use href="#bpc" transform="rotate(270)"/></g></g>
<g transform="translate(447.3 589) scale(0.413)">
<g fill="#d3d3d3"><use href="#spc" transform="rotate(45)"/><use href="#spc" transform="rotate(135)"/><use href="#spc" transform="rotate(225)"/><use href="#spc" transform="rotate(315)"/></g>
<g fill="#777" stroke="#fff" stroke-width="2.5"><use href="#bpc" transform="rotate(0)"/><use href="#bpc" transform="rotate(90)"/><use href="#bpc" transform="rotate(180)"/><use href="#bpc" transform="rotate(270)"/></g></g>
<g transform="translate(391.5 620) scale(0.413)">
<g fill="#d3d3d3"><use href="#spc" transform="rotate(45)"/><use href="#spc" transform="rotate(135)"/><use href="#spc" transform="rotate(225)"/><use href="#spc" transform="rotate(315)"/></g>
<g fill="#777" stroke="#fff" stroke-width="2.5"><use href="#bpc" transform="rotate(0)"/><use href="#bpc" transform="rotate(90)"/><use href="#bpc" transform="rotate(180)"/><use href="#bpc" transform="rotate(270)"/></g></g>
<g transform="translate(429 620) scale(0.413)">
<g fill="#d3d3d3"><use href="#spc" transform="rotate(45)"/><use href="#spc" transform="rotate(135)"/><use href="#spc" transform="rotate(225)"/><use href="#spc" transform="rotate(315)"/></g>
<g fill="#777" stroke="#fff" stroke-width="2.5"><use href="#bpc" transform="rotate(0)"/><use href="#bpc" transform="rotate(90)"/><use href="#bpc" transform="rotate(180)"/><use href="#bpc" transform="rotate(270)"/></g></g>
<g transform="translate(466.5 620) scale(0.413)">
<g fill="#d3d3d3"><use href="#spc" transform="rotate(45)"/><use href="#spc" transform="rotate(135)"/><use href="#spc" transform="rotate(225)"/><use href="#spc" transform="rotate(315)"/></g>
<g fill="#777" stroke="#fff" stroke-width="2.5"><use href="#bpc" transform="rotate(0)"/><use href="#bpc" transform="rotate(90)"/><use href="#bpc" transform="rotate(180)"/><use href="#bpc" transform="rotate(270)"/></g></g>
<g transform="translate(410.5 650) scale(0.413)">
<g fill="#d3d3d3"><use href="#spc" transform="rotate(45)"/><use href="#spc" transform="rotate(135)"/><use href="#spc" transform="rotate(225)"/><use href="#spc" transform="rotate(315)"/></g>
<g fill="#777" stroke="#fff" stroke-width="2.5"><use href="#bpc" transform="rotate(0)"/><use href="#bpc" transform="rotate(90)"/><use href="#bpc" transform="rotate(180)"/><use href="#bpc" transform="rotate(270)"/></g></g>
<g transform="translate(447.3 650) scale(0.413)">
<g fill="#d3d3d3"><use href="#spc" transform="rotate(45)"/><use href="#spc" transform="rotate(135)"/><use href="#spc" transform="rotate(225)"/><use href="#spc" transform="rotate(315)"/></g>
<g fill="#777" stroke="#fff" stroke-width="2.5"><use href="#bpc" transform="rotate(0)"/><use href="#bpc" transform="rotate(90)"/><use href="#bpc" transform="rotate(180)"/><use href="#bpc" transform="rotate(270)"/></g></g>
<rect x="351" y="658.5" width="156" height="20" fill="#474747" opacity="0.78"/>
<circle cx="359.5" cy="676.5" r="2" fill="#000"/>
</g>
<g clip-path="url(#c4)">
<rect x="518" y="560" width="156" height="118" fill="#b6c1cb"/>
<rect x="518" y="560" width="14" height="118" fill="#8eb0cd"/>
<path d="M532.3 560V670H674" fill="none" stroke="#6a7886" stroke-width="0.7"/>
<path d="M567 568.5H625.6L655.4 618.8L625.6 669.4H567L537.3 618.8Z" fill="none" stroke="#111" stroke-width="3.5" stroke-linejoin="round"/>
<rect x="518" y="658.3" width="156" height="20" fill="#8599ac" opacity="0.4"/>
</g>
<g clip-path="url(#c5)">
<rect x="686" y="560" width="156" height="118" fill="#b6c1cb"/>
<rect x="686" y="560" width="31" height="118" fill="#8eb0cd"/>
<path d="M717 560V678" stroke="#6a7886" stroke-width="0.7"/>
<use href="#td" transform="translate(763.7 581.5) rotate(180) scale(1.14)" fill="#5b6976" stroke="#b6c1cb" stroke-width="0.7"/>
<use href="#td" transform="translate(755.8 590.8) rotate(10) scale(1.14)" fill="#5b6976" stroke="#b6c1cb" stroke-width="0.7"/>
<use href="#td" transform="translate(771.6 590.8) rotate(-10) scale(1.14)" fill="#5b6976" stroke="#b6c1cb" stroke-width="0.7"/>
<use href="#td" transform="translate(748.7 604.5) rotate(30) scale(1.14)" fill="#5b6976" stroke="#b6c1cb" stroke-width="0.7"/>
<use href="#td" transform="translate(763.7 601.5) rotate(0) scale(1.14)" fill="#5b6976" stroke="#b6c1cb" stroke-width="0.7"/>
<use href="#td" transform="translate(778.2 604.5) rotate(-30) scale(1.14)" fill="#5b6976" stroke="#b6c1cb" stroke-width="0.7"/>
<use href="#td" transform="translate(741 614.5) rotate(0) scale(1.14)" fill="#5b6976" stroke="#b6c1cb" stroke-width="0.7"/>
<use href="#td" transform="translate(756.3 614) rotate(0) scale(1.14)" fill="#5b6976" stroke="#b6c1cb" stroke-width="0.7"/>
<use href="#td" transform="translate(770.9 614) rotate(0) scale(1.14)" fill="#5b6976" stroke="#b6c1cb" stroke-width="0.7"/>
<use href="#td" transform="translate(785.8 614.7) rotate(0) scale(1.14)" fill="#5b6976" stroke="#b6c1cb" stroke-width="0.7"/>
<use href="#td" transform="translate(736.5 630) rotate(60) scale(1.14)" fill="#5b6976" stroke="#b6c1cb" stroke-width="0.7"/>
<use href="#td" transform="translate(749.5 627.7) rotate(0) scale(1.14)" fill="#5b6976" stroke="#b6c1cb" stroke-width="0.7"/>
<use href="#td" transform="translate(763.7 628.5) rotate(180) scale(1.14)" fill="#5b6976" stroke="#b6c1cb" stroke-width="0.7"/>
<use href="#td" transform="translate(777.5 627.7) rotate(0) scale(1.14)" fill="#5b6976" stroke="#b6c1cb" stroke-width="0.7"/>
<use href="#td" transform="translate(790.5 630) rotate(-60) scale(1.14)" fill="#5b6976" stroke="#b6c1cb" stroke-width="0.7"/>
<use href="#td" transform="translate(741.8 643) rotate(0) scale(1.14)" fill="#5b6976" stroke="#b6c1cb" stroke-width="0.7"/>
<use href="#td" transform="translate(756.3 640.7) rotate(0) scale(1.14)" fill="#5b6976" stroke="#b6c1cb" stroke-width="0.7"/>
<use href="#td" transform="translate(770.9 640.7) rotate(0) scale(1.14)" fill="#5b6976" stroke="#b6c1cb" stroke-width="0.7"/>
<use href="#td" transform="translate(785 643) rotate(0) scale(1.14)" fill="#5b6976" stroke="#b6c1cb" stroke-width="0.7"/>
<use href="#td" transform="translate(750.2 654.8) rotate(0) scale(1.14)" fill="#5b6976" stroke="#b6c1cb" stroke-width="0.7"/>
<use href="#td" transform="translate(763.7 654) rotate(180) scale(1.14)" fill="#5b6976" stroke="#b6c1cb" stroke-width="0.7"/>
<use href="#td" transform="translate(777.2 654.8) rotate(0) scale(1.14)" fill="#5b6976" stroke="#b6c1cb" stroke-width="0.7"/>
<rect x="686" y="658.3" width="156" height="20" fill="#8599ac" opacity="0.4"/>
<circle cx="717" cy="677" r="2" fill="#111"/>
</g>
<g clip-path="url(#c6)">
<rect x="853" y="560" width="156" height="118" fill="#b6c1cb"/>
<rect x="853" y="560" width="34.5" height="118" fill="#8eb0cd"/>
<path d="M887.5 560V678" stroke="#6a7886" stroke-width="0.7"/>
<path d="M930.8 570.3 C947 590 966.3 613 966.3 632 C966.3 651 951 664 931.5 664 C912 664 896.8 651 896.8 632 C896.8 613 915 590 930.8 570.3 Z" fill="none" stroke="#111" stroke-width="3.4" stroke-linejoin="round"/>
<rect x="853" y="658.3" width="156" height="20" fill="#8599ac" opacity="0.4"/>
<circle cx="887.5" cy="677" r="2" fill="#111"/>
</g>
<rect x="1024.5" y="579" width="106.3" height="79" rx="4" fill="#b7c2cc"/>
<rect x="1030.8" y="587" width="94" height="64" fill="none" stroke="#2a2a2a" stroke-width="1.4" stroke-dasharray="5 4.2"/>
<path d="M1074.5 604.3H1081V615.8H1093.5V622H1081V634.8H1074.5V622H1062V615.8H1074.5Z" fill="none" stroke="#2a2a2a" stroke-width="1.5"/>
</svg>
<div class="cl" style="left:20px">Square v-carve file</div>
<div class="cl" style="left:187px">Square cutout file</div>
<div class="cl" style="left:355px">Hexagon v-carve file</div>
<div class="cl" style="left:522px">Hexagon cutout file</div>
<div class="cl" style="left:690px">Teardrop v-carve file</div>
<div class="cl" style="left:857px">Teardrop cutout file</div>
</div>
</body></html>
